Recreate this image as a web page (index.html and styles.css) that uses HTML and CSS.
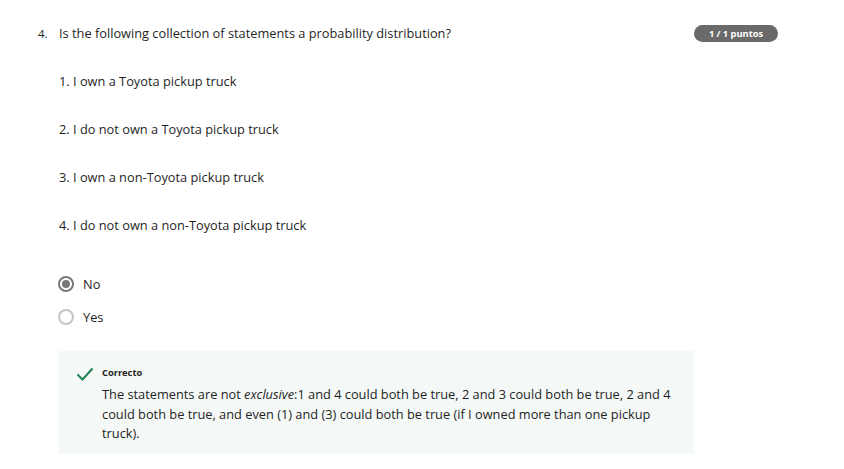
FILE: index.html
```html
<!DOCTYPE html>
<html>
<head>
<meta charset="utf-8">
<link rel="stylesheet" href="styles.css">
</head>
<body>
<div class="question">
  <div class="head">
    <span class="num">4.</span>
    <span class="qtext">Is the following collection of statements a probability distribution?</span>
    <span class="badge">1 / 1 puntos</span>
  </div>
  <div class="body">
    <p class="stmt">1. I own a Toyota pickup truck</p>
    <p class="stmt">2. I do not own a Toyota pickup truck</p>
    <p class="stmt">3. I own a non-Toyota pickup truck</p>
    <p class="stmt">4. I do not own a non-Toyota pickup truck</p>
    <div class="options">
      <div class="opt"><span class="radio checked"></span><span>No</span></div>
      <div class="opt"><span class="radio"></span><span>Yes</span></div>
    </div>
    <div class="feedback">
      <svg class="check" width="18" height="14" viewBox="0 0 18 14"><path d="M1.5 7.5 L6.5 12.5 L16.5 1.5" fill="none" stroke="#1f8354" stroke-width="2"/></svg>
      <div class="fb-content">
        <div class="fb-title">Correcto</div>
        <div class="fb-text">The statements are not <em>exclusive</em>:1 and 4 could both be true, 2 and 3 could both be true, 2 and 4 could both be true, and even (1) and (3) could both be true (if I owned more than one pickup truck).</div>
      </div>
    </div>
  </div>
</div>
</body>
</html>
```
FILE: styles.css
```css
html, body {
  margin: 0;
  padding: 0;
  background: #fff;
}
body {
  font-family: "Open Sans", sans-serif;
  color: #1f1f1f;
}
.question {
  padding: 24px 0 0 38px;
  width: 740px;
}
.head {
  display: flex;
  align-items: center;
  height: 18px;
}
.num {
  font-size: 11.5px;
  width: 21px;
}
.qtext {
  font-size: 12.8px;
  flex: 1;
}
.badge {
  background: #6a6a6a;
  color: #fff;
  font-size: 9.3px;
  font-weight: 700;
  border-radius: 9px;
  height: 17px;
  line-height: 17px;
  width: 84px;
  text-align: center;
}
.body {
  padding-left: 21px;
}
.stmt {
  margin: 0;
  font-size: 12.8px;
  line-height: 18px;
  padding-top: 30px;
}
.options {
  padding-top: 41px;
}
.opt {
  display: flex;
  align-items: center;
  gap: 9px;
  font-size: 12.8px;
  height: 18px;
  margin-bottom: 15px;
  margin-left: -1px;
}
.radio {
  width: 12px;
  height: 12px;
  border: 2px solid #c4c4c4;
  border-radius: 50%;
  box-sizing: content-box;
  position: relative;
}
.radio.checked {
  border-color: #777;
}
.radio.checked::after {
  content: "";
  position: absolute;
  left: 2px;
  top: 2px;
  width: 8px;
  height: 8px;
  border-radius: 50%;
  background: #777;
}
.feedback {
  margin-top: 25px;
  width: 635px;
  background: #f4f8f6;
  display: flex;
  padding: 14px 14px 10px 17px;
  box-sizing: border-box;
  gap: 8px;
}
.check {
  margin-top: 2px;
  flex: none;
}
.fb-title {
  font-size: 9.3px;
  font-weight: 700;
  line-height: 16px;
}
.fb-text {
  font-size: 12.8px;
  line-height: 19.5px;
  margin-top: 4px;
}
```
